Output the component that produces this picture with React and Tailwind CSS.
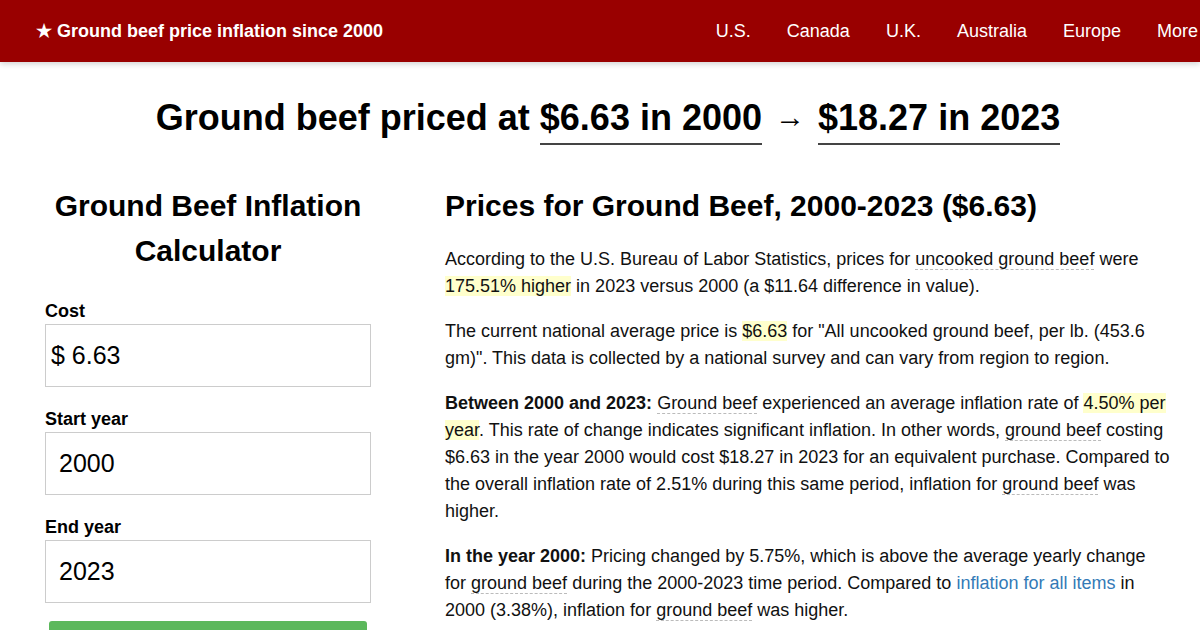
import React from 'react';

const navItems = ['U.S.', 'Canada', 'U.K.', 'Australia', 'Europe', 'More'];

function Term({ children }) {
  return <span className="border-b border-dashed border-[#bbb]">{children}</span>;
}

function Mark({ children }) {
  return <span className="bg-[#ffffcc]">{children}</span>;
}

function Field({ label, value, prefix }) {
  return (
    <div className="mt-[19px] first:mt-0">
      <label className="block text-[18px] font-bold leading-[26px] text-black">{label}</label>
      <div className="flex h-[63px] items-center border border-[#ccc] bg-white">
        {prefix ? (
          <span className="pl-[5px] text-[25px] text-black">$ {value}</span>
        ) : (
          <span className="pl-[13px] text-[25px] text-black">{value}</span>
        )}
      </div>
    </div>
  );
}

export default function App() {
  return (
    <div className="h-[630px] overflow-hidden bg-white text-[#111]" style={{ fontFamily: '"Liberation Sans", Arial, sans-serif' }}>
      <header className="relative z-10 flex h-[62px] items-center bg-[#990000] pl-[36px] pr-[2px] text-white shadow-[0_2px_6px_rgba(0,0,0,0.18)]">
        <div className="text-[18px] font-bold">★ Ground beef price inflation since 2000</div>
        <nav className="ml-auto flex gap-[36px] text-[18px]">
          {navItems.map((item) => (
            <a key={item} className="whitespace-nowrap">
              {item}
            </a>
          ))}
        </nav>
      </header>

      <h1 className="mt-[34px] pl-[16px] text-center text-[36px] font-bold leading-[42px] text-black">
        Ground beef priced at{' '}
        <span className="inline-block border-b-2 border-[#444] pb-[4px]">$6.63 in 2000</span>{' '}
        <span className="mx-[3px] align-[3px] text-[30px] font-normal">→</span>{' '}
        <span className="inline-block border-b-2 border-[#444] pb-[4px]">$18.27 in 2023</span>
      </h1>

      <main className="mt-[38px] flex gap-[74px] pl-[45px] pr-[30px]">
        <aside className="w-[326px] shrink-0">
          <h2 className="text-center text-[30px] font-bold leading-[45px] text-black">
            Ground Beef Inflation Calculator
          </h2>
          <form className="mt-[25px]">
            <Field label="Cost" value="6.63" prefix />
            <Field label="Start year" value="2000" />
            <Field label="End year" value="2023" />
            <button type="button" className="mx-[4px] mt-[18px] block h-[40px] w-[318px] rounded-[3px] bg-[#5cb85c]" />
          </form>
        </aside>

        <section className="flex-1">
          <h2 className="text-[30px] font-bold leading-[45px] text-black">
            Prices for Ground Beef, 2000-2023 ($6.63)
          </h2>
          <div className="mt-[18px] space-y-[18px] text-[18px] leading-[27px]">
            <p>
              According to the U.S. Bureau of Labor Statistics, prices for <Term>uncooked ground beef</Term> were{' '}
              <Mark>175.51% higher</Mark> in 2023 versus 2000 (a $11.64 difference in value).
            </p>
            <p>
              The current national average price is <Mark>$6.63</Mark> for "All uncooked ground beef, per lb. (453.6
              gm)". This data is collected by a national survey and can vary from region to region.
            </p>
            <p>
              <strong>Between 2000 and 2023:</strong> <Term>Ground beef</Term> experienced an average inflation rate of{' '}
              <Mark>4.50% per year</Mark>. This rate of change indicates significant inflation. In other words,{' '}
              <Term>ground beef</Term> costing $6.63 in the year 2000 would cost $18.27 in 2023 for an equivalent
              purchase. Compared to the overall inflation rate of 2.51% during this same period, inflation for{' '}
              <Term>ground beef</Term> was higher.
            </p>
            <p>
              <strong>In the year 2000:</strong> Pricing changed by 5.75%, which is above the average yearly change for{' '}
              <Term>ground beef</Term> during the 2000-2023 time period. Compared to{' '}
              <a className="text-[#337ab7]">inflation for all items</a> in 2000 (3.38%), inflation for{' '}
              <Term>ground beef</Term> was higher.
            </p>
          </div>
        </section>
      </main>
    </div>
  );
}
